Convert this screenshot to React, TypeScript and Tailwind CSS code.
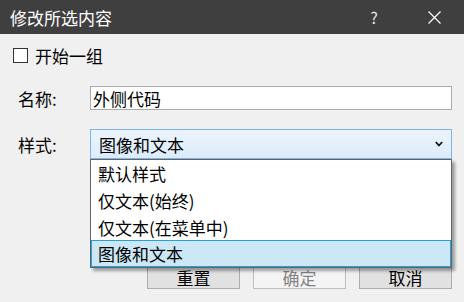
import React from "react";

const font = { fontFamily: '"Noto Sans CJK SC", "Noto Sans", sans-serif' };

export default function App() {
  return (
    <div
      className="w-[464px] h-[302px] bg-[#f0f0f0] text-[17px] text-black overflow-hidden relative"
      style={font}
    >
      {/* title bar */}
      <div className="h-[34px] bg-[#3f3f3f] flex items-center text-white">
        <div className="pl-[10px] flex-1 leading-none text-[17px]">修改所选内容</div>
        <div className="w-[20px] text-center text-[16px] leading-none mr-[44px] text-[#e8e8e8]">?</div>
        <svg width="13" height="13" viewBox="0 0 13 13" className="mr-[23px]">
          <path d="M0.5 0.5 L12.5 12.5 M12.5 0.5 L0.5 12.5" stroke="#ffffff" strokeWidth="1.2" />
        </svg>
      </div>

      {/* body */}
      <div className="pl-[13px] pr-[12px]">
        <div className="mt-[14px] h-[15px] flex items-center">
          <div className="w-[15px] h-[15px] border border-[#333333] bg-white" />
          <span className="ml-[7px] leading-none">开始一组</span>
        </div>

        <div className="mt-[23px] h-[24px] flex items-center">
          <div className="w-[77px] pl-[5px] leading-none">名称:</div>
          <div className="flex-1 h-[24px] border border-[#ababab] bg-white flex items-center pl-[2px] leading-none">
            外侧代码
          </div>
        </div>

        <div className="mt-[19px] h-[30px] flex items-center">
          <div className="w-[77px] pl-[5px] leading-none">样式:</div>
          <div className="flex-1 h-[30px] relative">
            <div className="h-full border border-[#7eb4ea] bg-gradient-to-b from-[#ecf4fc] to-[#dcecfc] flex items-center pl-[8px] pr-[8px] leading-none">
              <span className="flex-1">图像和文本</span>
              <svg width="8" height="6" viewBox="0 0 8 6">
                <path d="M0.8 1 L4 4.5 L7.2 1" stroke="#111" strokeWidth="1.8" fill="none" />
              </svg>
            </div>
            {/* dropdown list */}
            <div className="absolute left-0 right-0 top-full z-10 border border-[#646464] bg-white shadow-[3px_3px_3px_rgba(0,0,0,0.35)] leading-none">
              <div className="h-[27px] flex items-center pl-[7px]">默认样式</div>
              <div className="h-[27px] flex items-center pl-[7px]">仅文本(始终)</div>
              <div className="h-[26px] flex items-center pl-[7px]">仅文本(在菜单中)</div>
              <div className="h-[27px] flex items-center pl-[6px] bg-[#cce8f6] border border-[#26a0da]">图像和文本</div>
            </div>
          </div>
        </div>

        <div className="mt-[106px] h-[24px] flex justify-end gap-[13px] leading-none">
          <div className="w-[93px] h-[24px] border border-[#adadad] bg-[#e1e1e1] flex items-center justify-center">重置</div>
          <div className="w-[93px] h-[24px] border border-[#bfbfbf] bg-[#f4f4f4] text-[#838383] flex items-center justify-center">确定</div>
          <div className="w-[93px] h-[24px] border border-[#adadad] bg-[#e1e1e1] flex items-center justify-center">取消</div>
        </div>
      </div>
    </div>
  );
}
